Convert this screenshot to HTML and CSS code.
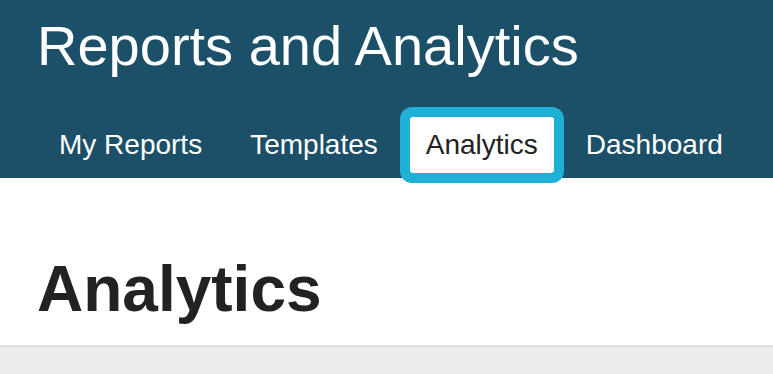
FILE: index.html
```html
<!DOCTYPE html>
<html lang="en">
<head>
    <meta charset="UTF-8">
    <meta name="viewport" content="width=device-width, initial-scale=1.0">
    <title>Reports and Analytics</title>
    <link rel="stylesheet" href="styles.css">
</head>
<body>
<!-- Topo com titulo e abas -->
<header>
    <h1>Reports and Analytics</h1>
    <nav>
        <ul>
            <li><a href="#">My Reports</a></li>
            <li><a href="#">Templates</a></li>
            <li><a href="#" class="active">Analytics</a></li>
            <li><a href="#">Dashboard</a></li>
        </ul>
    </nav>
</header>

<!-- Conteudo principal -->
<main>
    <h2>Analytics</h2>
</main>

<footer></footer>
</body>
</html>
```

FILE: styles.css
```css
/* Estilos gerais */
html, body {
    height: 100%;
}

body {
    font-family: "Liberation Sans", Arial, sans-serif;
    margin: 0;
    padding: 0;
    background-color: #fff;
    color: #222;
    display: flex;
    flex-direction: column;
}

header {
    background-color: #1c4f68;
    color: #fff;
    padding: 14px 0 5px 37px;
}

header h1 {
    margin: 0;
    font-size: 56px;
    font-weight: normal;
    line-height: 64px;
}

nav ul {
    list-style: none;
    margin: 39px 0 0;
    padding: 0 0 0 6px;
    display: flex;
}

nav ul li {
    margin: 0 8px;
    flex-shrink: 0;
}

nav ul li:first-child {
    margin-left: 0;
}

nav ul li a {
    display: block;
    padding: 12px 16px;
    font-size: 28px;
    line-height: 32px;
    color: #fff;
    text-decoration: none;
    white-space: nowrap;
}

nav ul li a.active {
    background-color: #fff;
    color: #222;
    border-radius: 2px;
    outline: 10px solid #1fb0d7;
}

/* Layout principal */
main {
    padding: 74px 37px 19px;
}

main h2 {
    margin: 0;
    font-size: 64px;
    font-weight: bold;
    line-height: 74px;
    color: #222;
}

footer {
    flex: 1;
    background-color: #ececec;
    border-top: 2px solid #e0e0e0;
}
```
